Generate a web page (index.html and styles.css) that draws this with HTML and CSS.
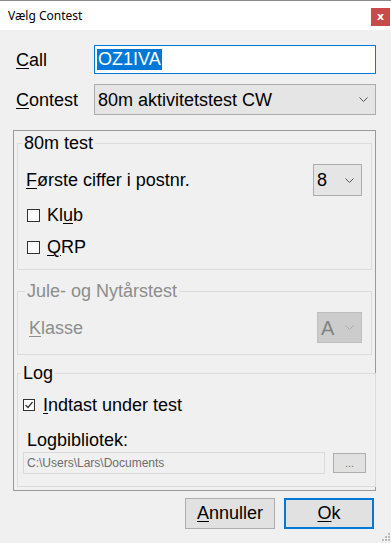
FILE: index.html
```html
<!DOCTYPE html>
<html lang="da">
  <head>
    <meta charset="UTF-8" />
    <meta name="viewport" content="width=device-width, initial-scale=1.0" />
    <link rel="stylesheet" href="styles.css">
    <title>Vælg Contest</title>
  </head>
  <body>
    <div class="vindue">
      <header class="titellinje">
        <span class="titel">Vælg Contest</span>
        <span class="luk">x</span>
      </header>

      <main class="indhold">
        <div class="raekke">
          <label class="etiket"><u>C</u>all</label>
          <div class="felt kaldesignal"><span class="markeret">OZ1IVA</span></div>
        </div>
        <div class="raekke contest-raekke">
          <label class="etiket"><u>C</u>ontest</label>
          <div class="combo bred">
            <span>80m aktivitetstest CW</span>
            <svg class="pil" width="9" height="5" viewBox="0 0 9 5"><path d="M0.5 0.5 L4.5 4.5 L8.5 0.5" fill="none" stroke="#555" stroke-width="1"/></svg>
          </div>
        </div>

        <section class="panel">
          <fieldset class="gruppe test80">
            <legend>80m test</legend>
            <div class="linje">
              <span><u>F</u>ørste ciffer i postnr.</span>
              <div class="combo lille">
                <span>8</span>
                <svg class="pil" width="9" height="5" viewBox="0 0 9 5"><path d="M0.5 0.5 L4.5 4.5 L8.5 0.5" fill="none" stroke="#555" stroke-width="1"/></svg>
              </div>
            </div>
            <div class="check klub"><span class="boks"></span>Kl<u>u</u>b</div>
            <div class="check qrp"><span class="boks"></span><u>Q</u>RP</div>
          </fieldset>

          <fieldset class="gruppe jul slukket">
            <legend>Jule- og Nytårstest</legend>
            <div class="linje">
              <span class="klasse"><u>K</u>lasse</span>
              <div class="combo lille deaktiv">
                <span>A</span>
                <svg class="pil" width="9" height="5" viewBox="0 0 9 5"><path d="M0.5 0.5 L4.5 4.5 L8.5 0.5" fill="none" stroke="#aaa" stroke-width="1"/></svg>
              </div>
            </div>
          </fieldset>

          <fieldset class="gruppe log">
            <legend>Log</legend>
            <div class="check indtast">
              <span class="boks lille-boks">
                <svg width="10" height="10" viewBox="0 0 10 10"><path d="M1.5 5 L4 7.5 L8.5 2" fill="none" stroke="#333" stroke-width="1.2"/></svg>
              </span><u>I</u>ndtast under test
            </div>
            <div class="biblabel">Logbibliotek:</div>
            <div class="sti-raekke">
              <div class="sti">C:\Users\Lars\Documents</div>
              <button class="prikker">...</button>
            </div>
          </fieldset>
        </section>

        <div class="knapper">
          <button class="knap"><u>A</u>nnuller</button>
          <button class="knap ok"><u>O</u>k</button>
        </div>
      </main>

      <svg class="greb" width="9" height="9" viewBox="0 0 9 9">
        <rect x="7" y="1" width="2" height="2" fill="#bbb"/>
        <rect x="4" y="4" width="2" height="2" fill="#bbb"/>
        <rect x="7" y="4" width="2" height="2" fill="#bbb"/>
        <rect x="1" y="7" width="2" height="2" fill="#bbb"/>
        <rect x="4" y="7" width="2" height="2" fill="#bbb"/>
        <rect x="7" y="7" width="2" height="2" fill="#bbb"/>
      </svg>
    </div>
  </body>
</html>
```

FILE: styles.css
```css
* {
  margin: 0;
  padding: 0;
  box-sizing: border-box;
}

body {
  background-color: #f0f0f0;
  font-family: "Liberation Sans", Arial, sans-serif;
  font-size: 18px;
  line-height: 20px;
  color: #000;
}

u {
  text-decoration-thickness: 1px;
  text-underline-offset: 2px;
}

.vindue {
  position: relative;
  width: 391px;
  height: 543px;
  border-top: 1px solid #8a8a8a;
}

.titellinje {
  height: 29px;
  background-color: #fff;
  display: flex;
  justify-content: space-between;
  align-items: center;
  padding-left: 8px;
}
.titel {
  font-family: "Noto Sans", "Open Sans", sans-serif;
  font-size: 12px;
  line-height: 16px;
}
.luk {
  width: 19px;
  height: 18px;
  margin-top: 2px;
  margin-right: 1px;
  background-color: #c94a4a;
  color: #fff;
  font-family: "DejaVu Sans", sans-serif;
  font-size: 11px;
  font-weight: bold;
  line-height: 17px;
  text-align: center;
}

.indhold {
  padding: 15px 15px 0 13px;
}

.raekke {
  display: flex;
  align-items: center;
  padding-left: 3px;
}
.contest-raekke {
  margin-top: 10px;
}
.etiket {
  width: 78px;
}

.felt {
  width: 282px;
  height: 29px;
  border: 1px solid #0078d7;
  background-color: #fff;
  padding: 3px 0 0 2px;
}
.markeret {
  display: inline-block;
  background-color: #0078d7;
  color: #fff;
  height: 21px;
  line-height: 21px;
  padding: 0 1px;
}

.combo {
  display: flex;
  align-items: center;
  justify-content: space-between;
  background-color: #e5e5e5;
  border: 1px solid #acacac;
  padding: 0 7px 0 3px;
}
.bred {
  width: 282px;
  height: 31px;
}
.lille {
  width: 49px;
  height: 32px;
}
.deaktiv {
  width: 45px;
  height: 31px;
  background-color: #cccccc;
  border-color: #bfbfbf;
  color: #838383;
  font-size: 20px;
}

.panel {
  margin-top: 15px;
  width: 363px;
  height: 361px;
  border: 1px solid #9a9a9a;
  padding: 2px 3px 0 3px;
}

.gruppe {
  border: 1px solid #dcdcdc;
  padding: 0 9px 12px 8px;
}
.gruppe legend {
  padding: 0 2px;
  margin-left: -4px;
  line-height: 20px;
}

.linje {
  display: flex;
  align-items: center;
  justify-content: space-between;
  margin-top: 11px;
}

.check {
  display: flex;
  align-items: center;
  height: 20px;
}
.boks {
  width: 13px;
  height: 13px;
  border: 1px solid #333;
  background-color: #fff;
  margin-right: 7px;
  display: flex;
  align-items: center;
  justify-content: center;
}
.klub {
  margin-top: 9px;
  padding-left: 1px;
}
.qrp {
  margin-top: 12px;
  padding-left: 1px;
}

.jul {
  margin-top: 11px;
  padding-bottom: 11px;
}
.slukket legend,
.klasse {
  color: #8d8d8d;
}
.jul legend {
  margin-left: -1px;
}
.klasse {
  padding-left: 3px;
}

.log {
  margin-top: 8px;
  padding-left: 5px;
}
.log legend {
  margin-left: -2px;
}
.indtast {
  margin-top: 12px;
}
.lille-boks {
  width: 12px;
  height: 12px;
  margin-right: 8px;
}
.biblabel {
  margin-top: 15px;
  padding-left: 4px;
}
.sti-raekke {
  display: flex;
  align-items: center;
  margin-top: 2px;
}
.sti {
  width: 302px;
  height: 22px;
  border: 1px solid #d9d9d9;
  background-color: #f0f0f0;
  color: #6d6d6d;
  font-size: 12px;
  line-height: 20px;
  padding-left: 3px;
}
.prikker {
  width: 33px;
  height: 20px;
  margin-left: 8px;
  border: 1px solid #adadad;
  background-color: #e1e1e1;
  color: #777;
  font-family: "Liberation Sans", sans-serif;
  font-size: 11px;
}

.knapper {
  display: flex;
  justify-content: flex-end;
  gap: 9px;
  margin-top: 7px;
  padding-right: 2px;
}
.knap {
  width: 90px;
  height: 31px;
  border: 1px solid #adadad;
  background-color: #e1e1e1;
  font-family: "Liberation Sans", sans-serif;
  font-size: 18px;
  color: #000;
}
.ok {
  border: 2px solid #0078d7;
}

.greb {
  position: absolute;
  right: 1px;
  bottom: 2px;
}
```
